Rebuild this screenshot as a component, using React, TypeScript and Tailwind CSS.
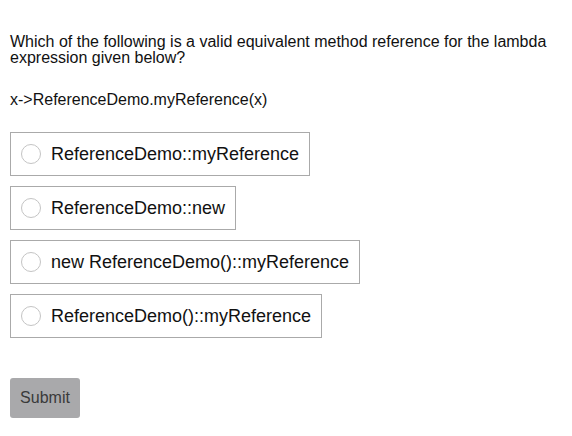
import React, { useState } from 'react';

const options = [
  'ReferenceDemo::myReference',
  'ReferenceDemo::new',
  'new ReferenceDemo()::myReference',
  'ReferenceDemo()::myReference',
];

export default function App() {
  const [selected, setSelected] = useState<number | null>(null);

  return (
    <div className="min-h-screen bg-white px-[10px] pt-[34px] text-[#111] font-['Liberation_Sans',Arial,sans-serif]">
      <p className="text-[16px] leading-[16px] max-w-[552px]">
        Which of the following is a valid equivalent method reference for the lambda expression given below?
      </p>
      <p className="mt-[26px] text-[16px] leading-[16px]">x-&gt;ReferenceDemo.myReference(x)</p>

      <div className="mt-[24px] flex flex-col items-start gap-[10px]">
        {options.map((opt, i) => (
          <label
            key={opt}
            onClick={() => setSelected(i)}
            className="flex h-[44px] cursor-pointer items-center gap-[10px] border border-[#aaa] pl-[10px] pr-[10px]"
          >
            <span className="flex h-[20px] w-[20px] items-center justify-center rounded-full border border-[#c4c4c4] bg-white">
              {selected === i && <span className="h-[10px] w-[10px] rounded-full bg-[#555]" />}
            </span>
            <span className="text-[18px] leading-[20px]">{opt}</span>
          </label>
        ))}
      </div>

      <button className="mt-[40px] h-[40px] w-[70px] rounded-[3px] bg-[#a9a9ab] text-[16px] text-[#3a3a3a]">
        Submit
      </button>
    </div>
  );
}
